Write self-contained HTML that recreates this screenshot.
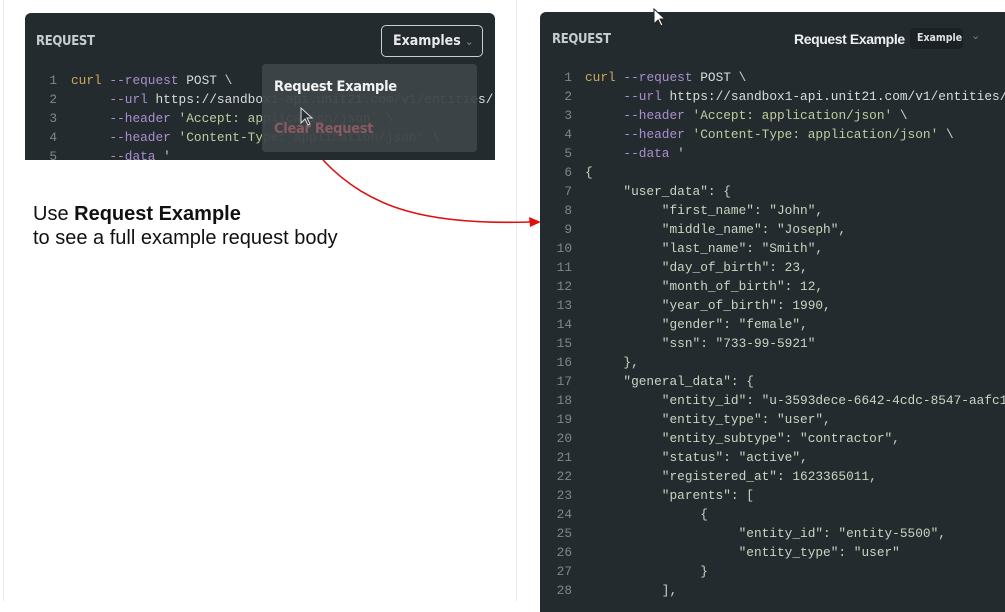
<!DOCTYPE html>
<html><head><style>
*{margin:0;padding:0;box-sizing:border-box}
body{width:1005px;height:601px;background:#fff;position:relative;overflow:hidden;font-family:"Liberation Sans",sans-serif}
.vl{position:absolute;top:0;bottom:0;width:1px;background:#ececec}
.panel{position:absolute;background:#232b2f;border-radius:6px 6px 0 0;overflow:hidden}
.hdr{position:absolute;color:#c8cdd0;font-size:13px;font-weight:bold;font-family:"DejaVu Sans Condensed","Liberation Sans",sans-serif;letter-spacing:-0.3px}
.code{position:absolute;font-family:"Liberation Mono",monospace;font-size:12.8px;line-height:19px;color:#cdd3c0;white-space:pre}
.ln{position:absolute;font-family:"Liberation Mono",monospace;font-size:12.8px;line-height:19px;color:#7f878c;text-align:right;white-space:pre}
.k{color:#c9a85a}.f{color:#a98fcf}.w{color:#dadcda}.s{color:#c1cb9d}
</style></head><body>
<div class="vl" style="left:3px"></div>
<div class="vl" style="left:516px"></div>

<div class="panel" style="left:25px;top:13px;width:470px;height:147px">
<div class="hdr" style="left:11px;top:21px">REQUEST</div>
<div style="position:absolute;left:356px;top:12px;width:102px;height:32px;border:1.5px solid #c8cdd0;border-radius:5px;color:#e8eaea;font-size:14px;font-weight:bold;font-family:'DejaVu Sans Condensed',sans-serif;padding:7px 0 0 11px">Examples <span style="color:#8a9094;font-weight:normal;font-size:11px">&#8964;</span></div>
<div class="ln" style="left:10px;top:58px;width:22px">1
2
3
4
5</div>
<div class="code" style="left:46px;top:58px"><span class="k">curl</span> <span class="f">--request</span> <span class="w">POST</span> \
     <span class="f">--url</span> <span class="w">https://sandbox1-api.unit21.com/v1/entities/</span>
     <span class="f">--header</span> <span class="s">'Accept: application/json'</span> \
     <span class="f">--header</span> <span class="s">'Content-Type: application/json'</span> \
     <span class="f">--data</span> <span class="s">'</span></div>
<div style="position:absolute;left:237px;top:51px;width:215px;height:88px;background:rgba(62,68,72,0.95);border-radius:4px">
<div style="position:absolute;left:12px;top:15px;color:#f2f3f3;font-size:14.5px;font-weight:bold;font-family:'DejaVu Sans Condensed',sans-serif;letter-spacing:-0.3px">Request Example</div>
<div style="position:absolute;left:12px;top:57px;color:#8a5a62;font-size:14.5px;font-weight:bold;font-family:'DejaVu Sans Condensed',sans-serif;letter-spacing:-0.3px">Clear Request</div>
<svg style="position:absolute;left:38px;top:43px" width="14" height="20" viewBox="0 0 14 20"><path d="M1 1 L1 16 L5 12 L8 18 L10 17 L7 11 L12 11 Z" fill="#2a3034" stroke="#ddd" stroke-width="1"/></svg>
</div>
</div>

<div style="position:absolute;left:33px;top:202px;font-size:20px;color:#111;line-height:24px">Use <b>Request Example</b><br>to see a full example request body</div>

<svg style="position:absolute;left:0;top:0" width="1005" height="601"><path d="M323 160 C 370 210, 430 225, 530 222" fill="none" stroke="#e01010" stroke-width="1.6"/><path d="M541 222 L529 217 L530 227 Z" fill="#e01010"/></svg>

<div class="panel" style="left:540px;top:12px;width:470px;height:600px">
<div class="hdr" style="left:12px;top:20px">REQUEST</div>
<div style="position:absolute;left:254px;top:19px;color:#eef0f0;font-size:14px;font-weight:bold;font-family:'Liberation Sans',sans-serif;letter-spacing:-0.4px">Request Example</div>
<div style="position:absolute;left:370px;top:16px;width:53px;height:21px;background:#1b2124;border-radius:4px;color:#e0e2e2;font-size:10.5px;font-weight:bold;font-family:'DejaVu Sans Condensed',sans-serif;padding:4px 0 0 7px">Example</div>
<div style="position:absolute;left:431px;top:17px;color:#7a8084;font-size:11px">&#8964;</div>
<div class="ln" style="left:8px;top:56px;width:24px">1
2
3
4
5
6
7
8
9
10
11
12
13
14
15
16
17
18
19
20
21
22
23
24
25
26
27
28</div>
<div class="code" style="left:45px;top:56px"><span class="k">curl</span> <span class="f">--request</span> <span class="w">POST</span> \
     <span class="f">--url</span> <span class="w">https://sandbox1-api.unit21.com/v1/entities/</span>
     <span class="f">--header</span> <span class="s">'Accept: application/json'</span> \
     <span class="f">--header</span> <span class="s">'Content-Type: application/json'</span> \
     <span class="f">--data</span> <span class="s">'</span>
{
     "user_data": {
          "first_name": "John",
          "middle_name": "Joseph",
          "last_name": "Smith",
          "day_of_birth": 23,
          "month_of_birth": 12,
          "year_of_birth": 1990,
          "gender": "female",
          "ssn": "733-99-5921"
     },
     "general_data": {
          "entity_id": "u-3593dece-6642-4cdc-8547-aafc1
          "entity_type": "user",
          "entity_subtype": "contractor",
          "status": "active",
          "registered_at": 1623365011,
          "parents": [
               {
                    "entity_id": "entity-5500",
                    "entity_type": "user"
               }
          ],</div>
</div>
<svg style="position:absolute;left:653px;top:8px" width="14" height="20" viewBox="0 0 14 20"><path d="M1 1 L1 16 L5 12 L8 18 L10 17 L7 11 L12 11 Z" fill="#fff" stroke="#222" stroke-width="1"/></svg>
</body></html>
